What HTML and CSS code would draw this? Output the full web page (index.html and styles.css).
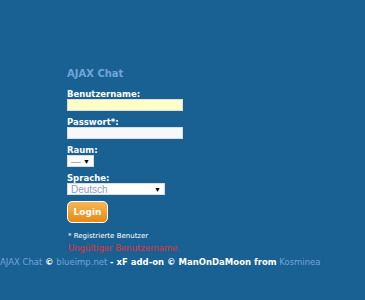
FILE: index.html
```html
<!DOCTYPE html>
<html>
	<head>
		<meta charset="UTF-8">
		<title>AJAX Chat</title>
		<link rel="stylesheet" href="styles.css">
	</head>
	<body>
		<div id="loginContent">
			<h1 class="title">AJAX Chat</h1>
			<form class="loginForm">
				<div class="row">
					<label for="userName">Benutzername:</label>
					<input type="text" id="userName" class="field name">
				</div>
				<div class="row">
					<label for="password">Passwort*:</label>
					<input type="password" id="password" class="field">
				</div>
				<div class="row">
					<label for="channel">Raum:</label>
					<div class="sel small"><span>—</span><i>▼</i></div>
				</div>
				<div class="row">
					<label for="lang">Sprache:</label>
					<div class="sel wide"><span>Deutsch</span><i>▼</i></div>
				</div>
				<button type="button" class="btnLogin">Login</button>
				<p class="note">* Registrierte Benutzer</p>
				<p class="error">Ungültiger Benutzername.</p>
			</form>
		</div>
		<div id="copyright">
			<a href="#">AJAX Chat</a> <b>©</b> <a href="#">blueimp.net</a> <b>- xF add-on © ManOnDaMoon from</b> <a href="#">Kosminea</a>
		</div>
	</body>
</html>
```

FILE: styles.css
```css
html, body {
	margin: 0;
	padding: 0;
	background: #1a6193;
	font-family: "DejaVu Sans", Verdana, sans-serif;
	color: #fff;
}
#loginContent {
	padding: 67px 0 0 67px;
}
.title {
	margin: 0 0 9px 0;
	font-size: 10px;
	line-height: 13px;
	font-weight: bold;
	color: #6fa6d8;
}
.loginForm {
	margin: 0;
}
.row {
	margin-bottom: 6px;
}
.row label {
	display: block;
	font-size: 8.5px;
	font-weight: bold;
	line-height: 10px;
}
.field {
	display: block;
	box-sizing: border-box;
	width: 116px;
	height: 12px;
	margin: 0;
	padding: 0;
	border: 1px solid #dcdcdc;
	background: #f6f8fc;
}
.field.name {
	background: #ffffc8;
}
.sel {
	display: flex;
	align-items: center;
	justify-content: space-between;
	box-sizing: border-box;
	height: 12px;
	padding: 0 3px;
	background: #fff;
	border: 1px solid #dcdcdc;
	font-family: "Liberation Sans", Arial, sans-serif;
	font-size: 10px;
	color: #9a9a9a;
}
.sel i {
	font-style: normal;
	font-size: 7px;
	color: #000;
}
.sel.small {
	width: 27px;
}
.sel.wide {
	width: 98px;
	color: #8a9ec0;
}
.btnLogin {
	display: block;
	box-sizing: border-box;
	width: 41px;
	height: 22px;
	margin-top: 4px;
	padding: 0;
	border: 1px solid #fff;
	border-radius: 5px;
	background: linear-gradient(#f7b654, #e58a16);
	color: #fff;
	font-family: "DejaVu Sans", Verdana, sans-serif;
	font-size: 9px;
	font-weight: bold;
}
.note {
	margin: 9px 0 0 1px;
	font-size: 7px;
	line-height: 9px;
}
.error {
	margin: 2px 0 0 1px;
	font-size: 8.5px;
	line-height: 11px;
	color: #e0323c;
}
#copyright {
	margin-top: 2px;
	font-size: 8.5px;
	line-height: 12px;
	white-space: nowrap;
}
#copyright a {
	color: #6fa6d8;
	text-decoration: none;
}
```
